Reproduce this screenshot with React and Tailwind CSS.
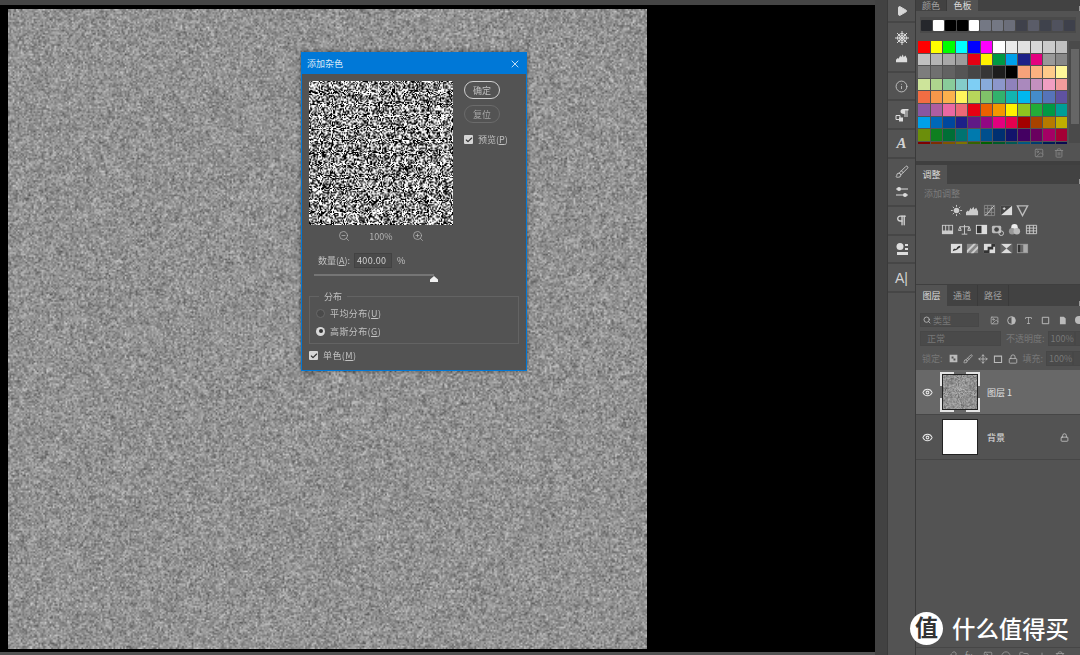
import { useEffect, useRef } from 'react';
import { Play, Info, Search, ZoomIn, ZoomOut, Eye, Lock, X, Check, Type, Move, Brush, Image, Pilcrow, Trash2, Link, Folder, Plus, Circle } from 'lucide-react';

const recent = ['#25272c', '#ffffff', '#000000', '#000000', '#ffffff', '#747884', '#747884', '#6b6e7a', '#3f414b', '#5a5c68', '#3f424c', '#50525e', '#3e404b'];

const swatches = [
  '#ff0000', '#ffff00', '#00ff00', '#00ffff', '#0000ff', '#ff00ff', '#ffffff', '#ebebeb', '#e1e1e1', '#d7d7d7', '#cbcbcb', '#c0c0c0',
  '#c0c0c0', '#b4b4b4', '#a8a8a8', '#9c9c9c', '#e60012', '#fff100', '#009944', '#00a0e9', '#1d2088', '#e4007f', '#999999', '#888888',
  '#7d7d7d', '#707070', '#626262', '#555555', '#464646', '#363636', '#1d1d1d', '#000000', '#f7a27a', '#fbb180', '#fdcb8a', '#fff799',
  '#cde49a', '#aed58e', '#89cb9a', '#84ccc9', '#7ecef4', '#88abda', '#8c97cb', '#8f82bc', '#aa89bd', '#c490bf', '#f19ec2', '#f29b9b',
  '#f26d43', '#f7974a', '#fbb14d', '#fff45c', '#b7d65b', '#80c269', '#32b16c', '#12b4b1', '#00b7ee', '#448ccb', '#5674b9', '#5f52a0',
  '#8957a1', '#ae5da1', '#ea68a2', '#ec6977', '#e60012', '#eb6100', '#f39800', '#fff100', '#8fc31f', '#22ac38', '#009944', '#009e96',
  '#00a0e9', '#0068b7', '#00479d', '#1d2088', '#601986', '#920783', '#e4007f', '#e5004f', '#a40000', '#a84200', '#b67a00', '#bfae00',
  '#6b8e0b', '#0f7f1f', '#006e36', '#007370', '#007aae', '#004f8d', '#003071', '#13146c', '#440062', '#6a005f', '#a40065', '#a40035',
  '#7f0000', '#7f2d00', '#805500', '#7f7300', '#366300', '#006100', '#005b29', '#005955', '#005982', '#003c70', '#001c59', '#0a0a50',
];

// noise is the picture's content, so it is painted on a canvas with a fixed seed
function Noise({ size, mode, className }) {
  const ref = useRef(null);

  useEffect(() => {
    const ctx = ref.current.getContext('2d');
    const img = ctx.createImageData(size, size);
    let seed = 12345 + size;
    const rnd = () => {
      seed = (seed + 0x6d2b79f5) | 0;
      let t = Math.imul(seed ^ (seed >>> 15), 1 | seed);
      t = (t + Math.imul(t ^ (t >>> 7), 61 | t)) ^ t;
      return ((t ^ (t >>> 14)) >>> 0) / 4294967296;
    };
    for (let i = 0; i < img.data.length; i += 4) {
      let v;
      if (mode === 'hard') {
        const r = rnd();
        v = r < 0.36 ? 0 : r > 0.6 ? 255 : 70 + rnd() * 150;
      } else {
        v = 146 + (rnd() + rnd() + rnd() - 1.5) * 46;
      }
      img.data[i] = v;
      img.data[i + 1] = v;
      img.data[i + 2] = v;
      img.data[i + 3] = 255;
    }
    ctx.putImageData(img, 0, 0);
  }, [size, mode]);

  return <canvas ref={ref} width={size} height={size} className={className} />;
}

function Glyph({ children, className = 'w-[13px] h-[13px]' }) {
  return (
    <svg viewBox="0 0 14 14" className={className}>
      {children}
    </svg>
  );
}

const adjustRows = [
  [
    <Glyph key="a"><circle cx="7" cy="7" r="3" fill="#ccc" /><path d="M7 1v2M7 11v2M1 7h2M11 7h2M3 3l1.300 1.300M9.700 9.700L11 11M11 3L9.700 4.300M4.300 9.700L3 11" stroke="#ccc" /></Glyph>,
    <Glyph key="b"><path d="M0 12V9l2-2 1 1 2-4 1 2 2-3 1 3 2-2 2 4v4z" fill="#ccc" /></Glyph>,
    <Glyph key="c"><path d="M1.500 1.500h11v11h-11zM1.500 5h11M1.500 9h11M5 1.500v11M9 1.500v11" stroke="#888" fill="none" /><path d="M2 12C6 11 8 5 12 2" stroke="#ccc" fill="none" /></Glyph>,
    <Glyph key="d"><path d="M1 2h12v10H1z" fill="#ddd" /><path d="M1 12L13 2H1z" fill="#444" /><path d="M3 5h3M4.500 3.500v3M8 9.500h3" stroke="#ddd" /></Glyph>,
    <Glyph key="e"><path d="M1.500 2h11L7 12.500z" stroke="#bbb" strokeWidth="1.500" fill="none" /></Glyph>,
  ],
  [
    <Glyph key="a"><path d="M1 2h12v10H1z" fill="#ccc" /><path d="M2 3h2.500v5H2zM5.500 3H8v5H5.500zM9 3h3v5H9z" fill="#555" /></Glyph>,
    <Glyph key="b"><path d="M7 2v10M4 12h6M2 4h10M2 4L0.500 8h3zM12 4l-1.500 4h3z" stroke="#ccc" fill="none" /></Glyph>,
    <Glyph key="c"><path d="M1 2h12v10H1z" fill="#ddd" /><path d="M2 3h5v8H2z" fill="#333" /></Glyph>,
    <Glyph key="d"><rect x="1" y="3" width="10" height="8" rx="1.500" fill="#bbb" /><circle cx="6" cy="7" r="2.500" fill="#444" /><circle cx="11" cy="11" r="2.500" fill="none" stroke="#ccc" /></Glyph>,
    <Glyph key="e"><circle cx="7" cy="4.500" r="3.500" fill="#eee" /><circle cx="4.500" cy="9" r="3.500" fill="#999" /><circle cx="9.500" cy="9" r="3.500" fill="#bbb" /></Glyph>,
    <Glyph key="f"><path d="M1.500 2.500h11v9h-11zM1.500 5.500h11M1.500 8.500h11M5 2.500v9M9 2.500v9" stroke="#ccc" fill="none" /></Glyph>,
  ],
  [
    <Glyph key="a"><path d="M1 2h12v10H1z" fill="#ddd" /><path d="M3 10c1-5 3-1 4-3s2-3 4-3v2C9 6 8 9 6 9s-2 1-3 1z" fill="#333" /></Glyph>,
    <Glyph key="b"><path d="M1 2h12v10H1z" fill="#888" /><path d="M1 9l7-7h3L1 12zM5 12l8-8v3l-5 5z" fill="#ccc" /></Glyph>,
    <Glyph key="c"><path d="M1 2h12v10H1z" fill="#ddd" /><path d="M1 12V9h4V5h4V2h4v3h-2v3H7v4z" fill="#333" /></Glyph>,
    <Glyph key="d"><path d="M1 2h12v10H1z" fill="#ddd" /><path d="M1 2l6 5-6 5zM13 2L7 7l6 5z" fill="#666" /></Glyph>,
    <Glyph key="e"><rect x="1" y="2" width="12" height="10" fill="#999" /><rect x="2" y="3" width="3" height="8" fill="#333" /><rect x="5" y="3" width="3" height="8" fill="#666" /><rect x="8" y="3" width="4" height="8" fill="#aaa" /></Glyph>,
  ],
];

function Shortcut({ children }) {
  return <u className="decoration-[#c4c4c4]">{children}</u>;
}

function Tick({ className = '' }) {
  return (
    <span className={`flex items-center justify-center w-[9px] h-[9px] rounded-[1px] bg-[#d6d6d6] ${className}`}>
      <Check size={8} strokeWidth={3.5} color="#333" />
    </span>
  );
}

function Dialog() {
  return (
    <div className="absolute left-[301px] top-[52px] w-[226px] h-[319px] flex flex-col border border-[#0078d7] bg-[#535353] text-[9px] leading-none text-[#c0c0c0] shadow-[0_0_4px_rgba(0,0,0,0.5)]">
      <div className="flex items-center justify-between h-[21px] shrink-0 bg-[#0078d7] pl-[5px] pr-[5px] text-[#d8e9f8]">
        <span>添加杂色</span>
        <X size={12} color="#f2f8fd" strokeWidth={1.6} />
      </div>

      <div className="flex pl-[7px] pt-[7px]">
        <div className="flex flex-col w-[144px]">
          <Noise size={132} mode="hard" className="w-[144px] h-[144px]" />
          <div className="flex items-center justify-center gap-[19px] mt-[5px] h-[12px] text-[#b4b4b4]">
            <ZoomOut size={12} strokeWidth={1.5} />
            <span>100%</span>
            <ZoomIn size={12} strokeWidth={1.5} />
          </div>
        </div>
        <div className="flex flex-col ml-[11px]">
          <div className="flex items-center justify-center w-[36px] h-[18px] rounded-full border border-[#cfcfcf]">确定</div>
          <div className="flex items-center justify-center w-[36px] h-[18px] mt-[6px] rounded-full border border-[#6b6b6b] text-[#a6a6a6]">复位</div>
          <div className="flex items-center mt-[12px]">
            <Tick />
            <span className="ml-[5px]">预览(<Shortcut>P</Shortcut>)</span>
          </div>
        </div>
      </div>

      <div className="flex items-center mt-[11px] ml-[16px]">
        <span>数量(<Shortcut>A</Shortcut>):</span>
        <span className="flex items-center w-[38px] h-[15px] ml-[4px] pl-[2px] bg-[#4a4a4a] border border-[#424242] tracking-[0.3px] text-[#d2d2d2]">400.00</span>
        <span className="ml-[5px]">%</span>
      </div>

      <div className="relative h-[9px] mt-[3px] ml-[12px] w-[124px]">
        <div className="h-[2px] w-[120px] mt-[3px] bg-[#757575]"></div>
        <svg viewBox="0 0 8 6" className="absolute right-0 top-[5px] w-[8px] h-[6px]">
          <path d="M0 6V3.500L4 0l4 3.500V6z" fill="#f0f0f0" />
        </svg>
      </div>

      <div className="relative mt-[16px] mx-[7px] h-[48px] border border-[#636363] pt-[11px] pl-[6px]">
        <span className="absolute left-[9px] -top-[5px] px-[5px] bg-[#535353]">分布</span>
        <div className="flex items-center h-[10px]">
          <span className="w-[9px] h-[9px] rounded-full bg-[#4a4a4a] border border-[#686868]"></span>
          <span className="ml-[5px] tracking-[0.4px]">平均分布(<Shortcut>U</Shortcut>)</span>
        </div>
        <div className="flex items-center h-[10px] mt-[8px]">
          <span className="flex items-center justify-center w-[9px] h-[9px] rounded-full bg-[#d8d8d8]">
            <span className="w-[4px] h-[4px] rounded-full bg-[#333]"></span>
          </span>
          <span className="ml-[5px] tracking-[0.4px]">高斯分布(<Shortcut>G</Shortcut>)</span>
        </div>
      </div>

      <div className="flex items-center mt-[7px] ml-[7px]">
        <Tick />
        <span className="ml-[5px] tracking-[0.4px]">单色(<Shortcut>M</Shortcut>)</span>
      </div>
    </div>
  );
}

function ToolGroup({ className, children }) {
  return <div className={`flex flex-col items-center justify-around shrink-0 border-b-2 border-[#464646] ${className}`}>{children}</div>;
}

function Toolbar() {
  return (
    <div className="flex flex-col w-[27px] shrink-0 bg-[#535353] text-[#d2d2d2]">
      <ToolGroup className="h-[23px]">
        <Play size={12} fill="#d8d8d8" color="#d8d8d8" />
      </ToolGroup>
      <ToolGroup className="h-[50px] py-[4px]">
        <Glyph className="w-[14px] h-[14px]"><circle cx="7" cy="7" r="2.500" fill="none" stroke="#ddd" /><path d="M7 0v14M0 7h14M2 2l10 10M12 2L2 12" stroke="#ddd" /><circle cx="7" cy="7" r="4.500" fill="none" stroke="#ddd" /></Glyph>
        <Glyph className="w-[14px] h-[12px]"><path d="M0 12V9l2-2 1 1 2-4 1 2 2-3 1 3 2-2 2 4v4z" fill="#ddd" /></Glyph>
      </ToolGroup>
      <ToolGroup className="h-[28px]">
        <Info size={13} strokeWidth={1.5} />
      </ToolGroup>
      <ToolGroup className="h-[29px]">
        <Glyph className="w-[14px] h-[14px]"><path d="M8 1h5.500v1.500h-1V9h-1V2.500h-1V9h-1V6C6.500 6 5.500 5 5.500 3.500S6.500 1 8 1z" fill="#ddd" /><path d="M1 7.500h4v4H1z" fill="none" stroke="#ddd" /><path d="M4 9.500h4v4H4z" fill="#ddd" /></Glyph>
      </ToolGroup>
      <ToolGroup className="h-[29px]">
        <span className="font-['Liberation_Serif',serif] italic text-[15px] leading-none font-bold">A</span>
      </ToolGroup>
      <ToolGroup className="h-[48px] py-[3px]">
        <Brush size={14} strokeWidth={1.5} />
        <Glyph className="w-[14px] h-[14px]"><path d="M1 4h12M1 10h12" stroke="#ddd" /><circle cx="4" cy="4" r="2" fill="#ddd" /><circle cx="10" cy="10" r="2" fill="#ddd" /></Glyph>
      </ToolGroup>
      <ToolGroup className="h-[29px]">
        <Pilcrow size={13} strokeWidth={2.5} />
      </ToolGroup>
      <ToolGroup className="h-[28px]">
        <Glyph className="w-[14px] h-[14px]"><circle cx="5" cy="4.500" r="3.500" fill="#ddd" /><path d="M10 2h3v2h-3zM10 6h3v2h-3zM2 10h11v3H2z" fill="#ddd" /></Glyph>
      </ToolGroup>
      <ToolGroup className="h-[29px]">
        <span className="text-[14px] leading-none font-['Liberation_Sans',sans-serif]">A|</span>
      </ToolGroup>
    </div>
  );
}

function TabBar({ tabs, active }) {
  return (
    <div className="flex items-end shrink-0 h-full bg-[#424242] text-[9px] leading-none">
      {tabs.map((t) => (
        <span
          key={t}
          className={`flex items-center justify-center h-full px-[6px] w-[31px] ${t === active ? 'bg-[#535353] text-[#dddddd]' : 'text-[#a0a0a0] border-r border-[#3a3a3a]'}`}
        >
          {t}
        </span>
      ))}
      <span className="ml-auto mr-[1px] w-[3px] h-[5px] bg-[#999]"></span>
    </div>
  );
}

function SwatchesPanel() {
  return (
    <div className="flex flex-col h-[161px] shrink-0 bg-[#535353]">
      <div className="h-[11px] shrink-0">
        <TabBar tabs={['颜色', '色板']} active="色板" />
      </div>
      <div className="flex gap-px mt-[6px] ml-[4px] w-[156px] p-[2px] pl-[1px] h-[16px] bg-[#4a4a4a]">
        {recent.map((c, i) => (
          <span key={i} className="w-[10.900px] h-[11px] mt-[1px] shrink-0 rounded-[1px]" style={{ backgroundColor: c }}></span>
        ))}
      </div>
      <div className="flex mt-[8px] ml-[2px]">
        <div className="grid grid-cols-[repeat(12,11.500px)] auto-rows-[11.600px] gap-x-px gap-y-px h-[103px] overflow-hidden">
          {swatches.map((c, i) => (
            <span key={i} style={{ backgroundColor: c }}></span>
          ))}
        </div>
        <div className="flex flex-col items-center w-[12px] ml-[2px] h-[102px] bg-[#4a4a4a] py-[3px]">
          <span className="w-[8px] h-[75px] mt-[5px] bg-[#666666]"></span>
        </div>
      </div>
      <div className="flex justify-end items-center gap-[10px] mt-[4px] pr-[19px] text-[#888]">
        <Image size={10} />
        <Trash2 size={10} />
      </div>
    </div>
  );
}

function AdjustPanel() {
  return (
    <div className="flex flex-col h-[119px] shrink-0 mt-[4px] bg-[#535353]">
      <div className="h-[19px] shrink-0">
        <TabBar tabs={['调整']} active="调整" />
      </div>
      <div className="pl-[8px] pt-[4px] text-[9px] leading-[12px] text-[#7c7c7c]">添加调整</div>
      <div className="flex flex-col items-center gap-[6px] mt-[4px] mr-[20px]">
        {adjustRows.map((row, i) => (
          <div key={i} className="flex gap-[3.700px]">
            {row}
          </div>
        ))}
      </div>
    </div>
  );
}

function Field({ className, children }) {
  return <div className={`flex items-center h-[14px] bg-[#4a4a4a] border border-[#474747] text-[#777] pl-[2px] ${className}`}>{children}</div>;
}

function LayerRow({ selected, name, children, lock }) {
  return (
    <div className={`flex items-center h-[45px] mr-[3px] border-b border-[#464646] ${selected ? 'bg-[#686868]' : 'bg-[#535353]'}`}>
      <Eye size={11} color="#e8e8e8" strokeWidth={2.2} className="ml-[6px] shrink-0" />
      <div className="ml-[7px] shrink-0">{children}</div>
      <span className="ml-[7px] text-[#e0e0e0]">{name}</span>
      {lock && <Lock size={9} color="#cfcfcf" className="ml-auto mr-[11px]" />}
    </div>
  );
}

function LayersPanel() {
  return (
    <div className="flex flex-col flex-1 mt-[1px] bg-[#535353] text-[9px] leading-none">
      <div className="h-[21px] shrink-0">
        <TabBar tabs={['图层', '通道', '路径']} active="图层" />
      </div>
      <div className="flex items-center h-[14px] mt-[7px] ml-[4px] overflow-hidden">
        <Field className="w-[59px] shrink-0">
          <Search size={8} strokeWidth={2.5} color="#bbb" />
          <span className="ml-[2px]">类型</span>
        </Field>
        <div className="flex items-center gap-[8px] ml-[11px] text-[#b8b8b8]">
          <Image size={9} />
          <Glyph className="w-[9px] h-[9px]"><circle cx="7" cy="7" r="6" fill="none" stroke="#bbb" strokeWidth="1.500" /><path d="M7 1a6 6 0 010 12z" fill="#bbb" /></Glyph>
          <Type size={9} />
          <Glyph className="w-[9px] h-[9px]"><path d="M2 2h10v10H2z" fill="none" stroke="#bbb" strokeWidth="1.500" /></Glyph>
          <Glyph className="w-[9px] h-[9px]"><path d="M3 1h6l3 3v9H3z" fill="#bbb" /></Glyph>
          <span className="w-[8px] h-[8px] rounded-full bg-[#bbb] shrink-0"></span>
        </div>
      </div>
      <div className="flex items-center mt-[4px] ml-[4px] overflow-hidden text-[#777]">
        <Field className="w-[81px] h-[15px] shrink-0 pl-[6px]">正常</Field>
        <span className="ml-[5px] shrink-0">不透明度:</span>
        <Field className="w-[27px] h-[15px] ml-[3px] shrink-0">100%</Field>
        <Field className="w-[8px] h-[15px] shrink-0"></Field>
      </div>
      <div className="flex items-center mt-[5px] ml-[6px] overflow-hidden text-[#777]">
        <span className="shrink-0">锁定:</span>
        <span className="flex items-center gap-[5px] ml-[6px] text-[#bbb] shrink-0">
          <Glyph className="w-[9px] h-[9px]"><path d="M1 1h12v12H1zM4 4h3v3H4zM7 7h3v3H7z" fill="#bbb" fillRule="evenodd" /></Glyph>
          <Brush size={10} />
          <Move size={10} />
          <Glyph className="w-[10px] h-[10px]"><path d="M2 3h10v9H2z" fill="none" stroke="#bbb" strokeWidth="1.500" /></Glyph>
          <Lock size={10} />
        </span>
        <span className="ml-[5px] shrink-0">填充:</span>
        <Field className="w-[27px] h-[15px] ml-[3px] shrink-0">100%</Field>
        <Field className="w-[8px] h-[15px] shrink-0"></Field>
      </div>
      <div className="flex flex-col mt-[4px]">
        <LayerRow selected name="图层 1">
          <div className="relative w-[40px] h-[40px] p-[2px]">
            <Noise size={36} className="w-full h-full border border-[#222]" />
            <span className="absolute inset-0 border-2 border-[#e4e4e4] [clip-path:polygon(0_0,35%_0,35%_8%,65%_8%,65%_0,100%_0,100%_35%,92%_35%,92%_65%,100%_65%,100%_100%,65%_100%,65%_92%,35%_92%,35%_100%,0_100%,0_65%,8%_65%,8%_35%,0_35%)]"></span>
          </div>
        </LayerRow>
        <LayerRow name="背景" lock>
          <div className="w-[40px] h-[40px] p-[2px]">
            <div className="w-full h-full bg-white border border-[#222]"></div>
          </div>
        </LayerRow>
      </div>
      <div className="flex items-start gap-[8px] mt-auto h-[8px] overflow-hidden border-t border-[#464646] pl-[31px] pt-[3px] text-[#9a9a9a]">
        <Link size={10} />
        <span className="w-[10px] text-[9px]">fx</span>
        <Image size={10} />
        <Circle size={10} />
        <Folder size={10} />
        <Plus size={10} />
        <Trash2 size={10} />
      </div>
    </div>
  );
}

export default function App() {
  return (
    <div className="relative flex flex-col w-[1080px] h-[655px] overflow-hidden bg-black font-['Noto_Sans_CJK_SC','Liberation_Sans',sans-serif]">
      <div className="flex flex-1 min-h-0">
        <div className="relative flex flex-col w-[875px] shrink-0 bg-black">
          <div className="h-[5px] shrink-0 bg-[#454545]"></div>
          <div className="flex-1 pt-[4px] pl-[8px]">
            <Noise size={400} className="w-[639px] h-[640px]" />
          </div>
          <div className="h-[3px] shrink-0 bg-[#535353]"></div>
          <Dialog />
        </div>
        <div className="w-[13px] shrink-0 bg-[#424242] border-r border-[#3a3a3a]"></div>
        <Toolbar />
        <div className="w-[1px] shrink-0 bg-[#3a3a3a]"></div>
        <div className="flex flex-col flex-1 bg-[#3f3f3f]">
          <SwatchesPanel />
          <AdjustPanel />
          <LayersPanel />
        </div>
      </div>

      {/* watermark */}
      <div className="absolute left-[910px] top-[612px] flex items-center">
        <span className="flex items-center justify-center w-[33px] h-[33px] rounded-full bg-white text-[23px] leading-none font-bold text-[#333] font-['Liberation_Serif','Noto_Sans_CJK_SC',serif]">值</span>
        <span className="ml-[9px] text-[23.400px] leading-none font-medium text-white whitespace-nowrap">什么值得买</span>
      </div>
    </div>
  );
}
